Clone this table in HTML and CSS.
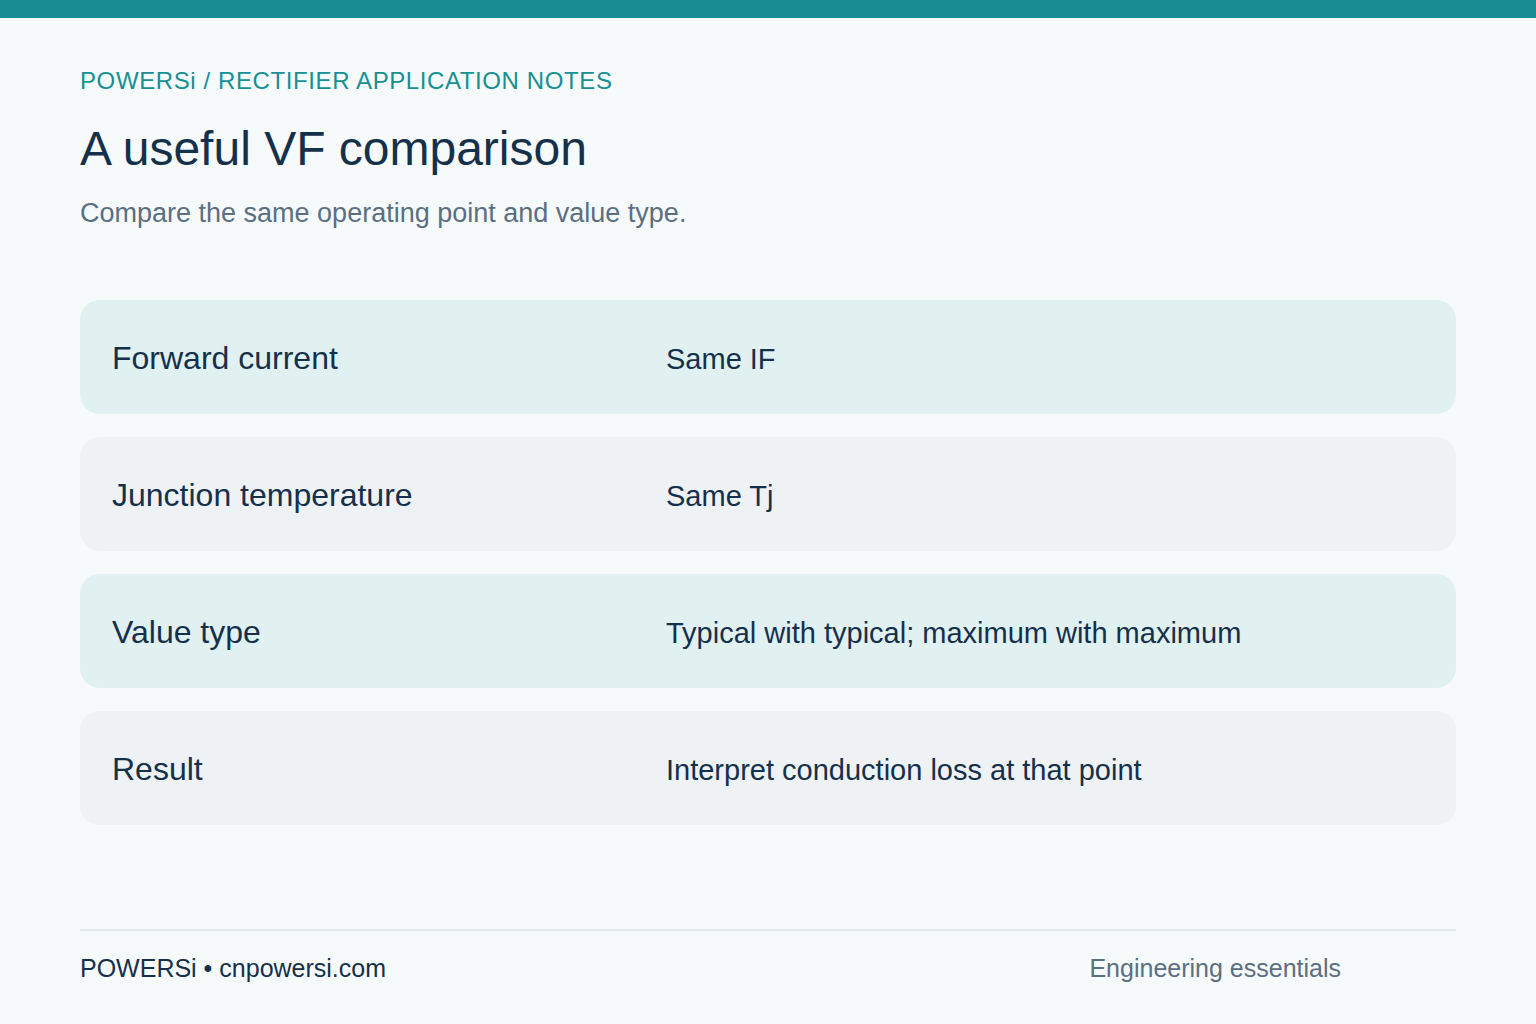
FILE: index.html
```html
<!DOCTYPE html>
<html lang="en">
<head>
<meta charset="utf-8">
<title>A useful VF comparison</title>
<link rel="stylesheet" href="styles.css">
</head>
<body>
<div class="topbar"></div>
<main class="page">
  <header class="head">
    <div class="eyebrow">POWERSi / RECTIFIER APPLICATION NOTES</div>
    <h1 class="title">A useful VF comparison</h1>
    <p class="subtitle">Compare the same operating point and value type.</p>
  </header>
  <section class="rows">
    <div class="row row-teal"><div class="label">Forward current</div><div class="value">Same IF</div></div>
    <div class="row row-grey"><div class="label">Junction temperature</div><div class="value">Same Tj</div></div>
    <div class="row row-teal"><div class="label">Value type</div><div class="value">Typical with typical; maximum with maximum</div></div>
    <div class="row row-grey"><div class="label">Result</div><div class="value">Interpret conduction loss at that point</div></div>
  </section>
  <footer class="footer">
    <div class="foot-left">POWERSi • cnpowersi.com</div>
    <div class="foot-right">Engineering essentials</div>
  </footer>
</main>
</body>
</html>
```
FILE: styles.css
```css
html, body {
  margin: 0;
  padding: 0;
}
body {
  background: #f6fafb;
  font-family: "Liberation Sans", Arial, sans-serif;
  color: #15304a;
  width: 1536px;
  height: 1024px;
  overflow: hidden;
}
.topbar {
  height: 18px;
  background: #178c91;
}
.page {
  padding: 49px 80px 0 80px;
}
.head {
  display: flex;
  flex-direction: column;
}
.eyebrow {
  font-size: 24px;
  line-height: 28px;
  letter-spacing: 0.6px;
  color: #179093;
}
.title {
  margin: 26px 0 0 0;
  font-size: 48px;
  line-height: 56px;
  font-weight: 400;
  color: #15304a;
}
.subtitle {
  margin: 20px 0 0 0;
  font-size: 27px;
  line-height: 32px;
  color: #5b6f82;
}
.rows {
  margin-top: 71px;
  display: flex;
  flex-direction: column;
  gap: 23px;
}
.row {
  height: 114px;
  border-radius: 20px;
  padding: 2px 32px 0 32px;
  display: grid;
  grid-template-columns: 554px 1fr;
  align-items: center;
  box-sizing: border-box;
}
.row-teal { background: #e1f0f0; }
.row-grey { background: #eef2f4; }
.label {
  font-size: 32px;
  color: #15304a;
}
.value {
  font-size: 29px;
  color: #15304a;
  padding-top: 2px;
}
.footer {
  margin-top: 104px;
  border-top: 2px solid #e1e9ec;
  padding-top: 22px;
  display: flex;
  justify-content: space-between;
  font-size: 25px;
  line-height: 30px;
}
.foot-left { color: #15304a; }
.foot-right {
  color: #5b6f82;
  padding-right: 115px;
}
```
